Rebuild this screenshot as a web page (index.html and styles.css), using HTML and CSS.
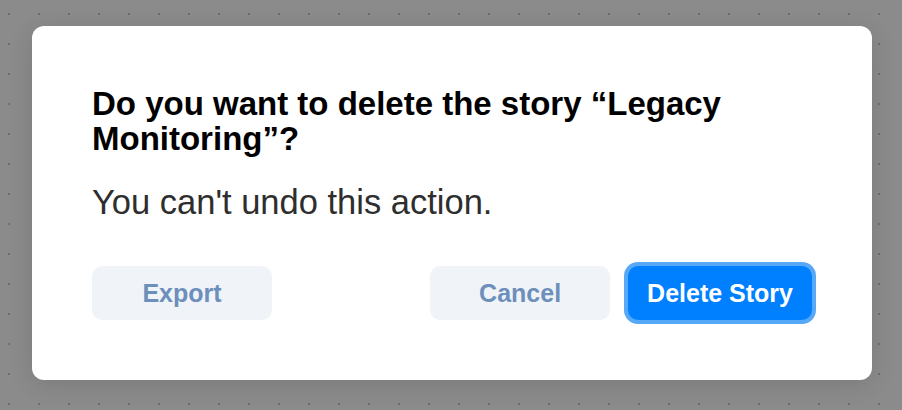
FILE: index.html
```html
<!DOCTYPE html>
<html lang="en">
<head>
<meta charset="utf-8">
<title>Delete story</title>
<link rel="stylesheet" href="styles.css">
</head>
<body>
<div class="overlay">
  <div class="dialog" role="dialog" aria-modal="true">
    <h2 class="title">Do you want to delete the story “Legacy Monitoring”?</h2>
    <p class="message">You can't undo this action.</p>
    <div class="actions">
      <button class="btn btn-secondary">Export</button>
      <div class="actions-right">
        <button class="btn btn-secondary">Cancel</button>
        <button class="btn btn-primary">Delete Story</button>
      </div>
    </div>
  </div>
</div>
</body>
</html>
```
FILE: styles.css
```css
html, body {
  margin: 0;
  padding: 0;
  height: 100%;
}
body {
  font-family: "Liberation Sans", Arial, Helvetica, sans-serif;
  background-color: #8a8b8a;
  background-image: radial-gradient(circle at 1px 1px, #6c6f7a 1px, transparent 1.4px);
  background-size: 30px 30px;
  background-position: 8px 13px;
}
.overlay {
  padding: 26px 30px 0 32px;
}
.dialog {
  box-sizing: border-box;
  width: 840px;
  height: 354px;
  background: #ffffff;
  border-radius: 12px;
  padding: 60px;
  box-shadow: 0 4px 24px rgba(0, 0, 0, 0.12);
  display: flex;
  flex-direction: column;
}
.title {
  margin: 0;
  font-size: 33px;
  line-height: 35px;
  font-weight: 700;
  color: #000000;
}
.message {
  margin: 28px 0 0;
  font-size: 34.5px;
  line-height: 36px;
  color: #2e2e2e;
}
.actions {
  margin-top: auto;
  display: flex;
  justify-content: space-between;
  align-items: center;
}
.actions-right {
  display: flex;
  gap: 18px;
}
.btn {
  font-family: inherit;
  font-size: 25px;
  font-weight: 700;
  height: 54px;
  min-width: 180px;
  border: 0;
  border-radius: 10px;
  padding: 0 19px;
}
.btn-secondary {
  background: #f0f4f8;
  color: #6d8fbb;
}
.btn-primary {
  background: #0080ff;
  color: #ffffff;
  box-shadow: 0 0 0 4px #58a8f8;
}
```
